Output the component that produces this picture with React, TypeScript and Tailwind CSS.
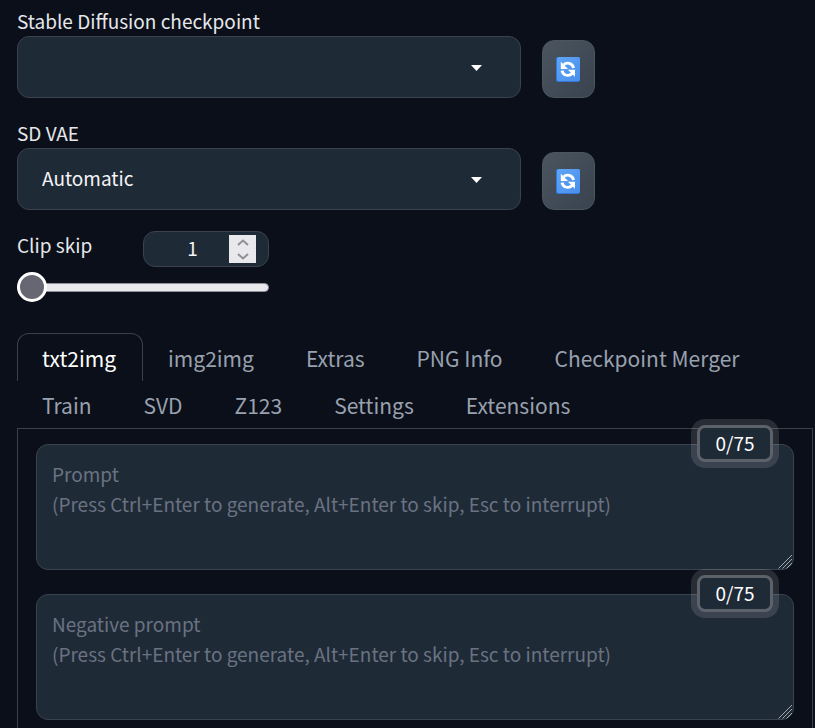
import { useState } from "react";
import { clsx } from "clsx";

const tabs = [
  "txt2img",
  "img2img",
  "Extras",
  "PNG Info",
  "Checkpoint Merger",
  "Train",
  "SVD",
  "Z123",
  "Settings",
  "Extensions",
];

const RefreshIcon = () => (
  <svg width="25" height="25" viewBox="0 0 25 25" aria-hidden="true">
    <defs>
      <linearGradient id="refresh-bg" x1="0" y1="0" x2="1" y2="1">
        <stop offset="0" stopColor="#5ea6f6" />
        <stop offset="1" stopColor="#4a8eee" />
      </linearGradient>
    </defs>
    <rect width="24" height="25" rx="2" fill="#3577d4" />
    <rect x="1" y="0" width="23" height="24" rx="2" fill="url(#refresh-bg)" />
    <path d="M4.8 4.8V12H12L9.2 9.2Z" fill="#fff" />
    <path d="M19 19.7V12.8H11.8L14.6 15.6Z" fill="#fff" />
    <path
      d="M7.5 8C10.5 5 16.5 5.6 17.6 11"
      fill="none"
      stroke="#fff"
      strokeWidth="2.8"
    />
    <path
      d="M16.2 16.6C13.2 19.6 7.2 19 6 13.6"
      fill="none"
      stroke="#fff"
      strokeWidth="2.8"
    />
  </svg>
);

type SelectRowProps = {
  id: string;
  label: string;
  options: string[];
};

const SelectRow = ({ id, label, options }: SelectRowProps) => (
  <div className="flex w-full max-w-[578px] items-end gap-[21px]">
    <div className="flex min-w-0 flex-1 flex-col">
      <label htmlFor={id} className="pb-0.5 text-[19px] leading-[26px]">
        {label}
      </label>
      <div className="relative">
        <select
          id={id}
          className="block h-[62px] w-full appearance-none rounded-xl border border-[#39424e] bg-[#1f2a37] px-6 pb-0.5 text-[19px] text-gray-100 outline-none"
        >
          {options.map((option) => (
            <option key={option}>{option}</option>
          ))}
        </select>
        <svg
          className="pointer-events-none absolute top-7 right-[38px]"
          width="13"
          height="8"
          viewBox="0 0 13 8"
          aria-hidden="true"
        >
          <path d="M1 1H12L6.5 7Z" fill="#fff" />
        </svg>
      </div>
    </div>
    <button
      type="button"
      aria-label={`Refresh ${label}`}
      className="flex h-[58px] w-[53px] shrink-0 items-center justify-center rounded-xl border border-[#4b5560] bg-linear-to-br from-[#4b5560] to-[#39434f]"
    >
      <RefreshIcon />
    </button>
  </div>
);

const PromptBox = ({ label }: { label: string }) => (
  <div className="relative">
    <textarea
      aria-label={label}
      placeholder={`${label}\n(Press Ctrl+Enter to generate, Alt+Enter to skip, Esc to interrupt)`}
      className="block h-[126px] w-full resize-none rounded-xl border border-[#39424e] bg-[#1f2a37] px-[15px] py-[14px] text-[19px] leading-[30px] text-gray-100 outline-none placeholder:text-gray-500"
    />
    {/* Resize grip */}
    <svg
      className="pointer-events-none absolute right-px bottom-px"
      width="15"
      height="15"
      viewBox="0 0 15 15"
      aria-hidden="true"
    >
      <path
        d="M0.5 14.5L14 1M4.5 14.5L14 5M8.5 14.5L14 9"
        stroke="#a3a8af"
        strokeWidth="1"
      />
    </svg>
    {/* Token counter */}
    <div className="absolute -top-[19px] right-[21px] flex h-[37px] w-[76px] items-center justify-center rounded-lg border-3 border-[#5d626a] bg-[#1f2a37] pb-0.5 text-[19px] leading-7 text-white ring-6 ring-white/12">
      0/75
    </div>
  </div>
);

const App = () => {
  const [clipSkip, setClipSkip] = useState(1);
  const [activeTab, setActiveTab] = useState("txt2img");

  const changeClipSkip = (value: number) =>
    setClipSkip(Math.min(12, Math.max(1, value)));

  return (
    <div className="flex min-h-screen flex-col bg-[#0b0f19] pt-2 pr-[2px] pl-[17px] font-['Noto_Sans_CJK_SC',sans-serif] text-gray-200">
      <div className="flex flex-col gap-[22px]">
        <SelectRow
          id="checkpoint"
          label="Stable Diffusion checkpoint"
          options={[""]}
        />
        <SelectRow id="vae" label="SD VAE" options={["Automatic", "None"]} />
      </div>

      {/* Clip skip */}
      <div className="mt-[21px] flex w-full max-w-[252px] flex-col gap-[5px]">
        <div className="flex justify-between">
          <label htmlFor="clip-skip" className="text-[19px] leading-7">
            Clip skip
          </label>
          <div className="flex h-9 w-[126px] items-center rounded-xl border border-[#39424e] bg-[#1f2a37] px-3">
            <input
              id="clip-skip"
              type="number"
              value={clipSkip}
              onChange={(e) => changeClipSkip(Number(e.target.value))}
              className="w-full min-w-0 flex-1 appearance-none bg-transparent pb-0.5 text-center text-[19px] leading-7 text-gray-100 outline-none [-moz-appearance:textfield] [&::-webkit-inner-spin-button]:appearance-none"
            />
            <div className="flex h-7 w-[27px] shrink-0 flex-col bg-[#e9e9ed]">
              <button
                type="button"
                aria-label="Increase"
                onClick={() => changeClipSkip(clipSkip + 1)}
                className="flex flex-1 items-center justify-center"
              >
                <svg width="12" height="7" viewBox="0 0 12 7">
                  <path
                    d="M1 6L6 1.5L11 6"
                    fill="none"
                    stroke="#8f8f94"
                    strokeWidth="2"
                  />
                </svg>
              </button>
              <button
                type="button"
                aria-label="Decrease"
                onClick={() => changeClipSkip(clipSkip - 1)}
                className="flex flex-1 items-center justify-center"
              >
                <svg width="12" height="7" viewBox="0 0 12 7">
                  <path
                    d="M1 1L6 5.5L11 1"
                    fill="none"
                    stroke="#8f8f94"
                    strokeWidth="2"
                  />
                </svg>
              </button>
            </div>
          </div>
        </div>
        <input
          type="range"
          aria-label="Clip skip slider"
          min={1}
          max={12}
          value={clipSkip}
          onChange={(e) => changeClipSkip(Number(e.target.value))}
          className="h-[30px] w-full appearance-none bg-transparent [&::-webkit-slider-runnable-track]:h-[9px] [&::-webkit-slider-runnable-track]:rounded-full [&::-webkit-slider-runnable-track]:border [&::-webkit-slider-runnable-track]:border-[#8f8f9d] [&::-webkit-slider-runnable-track]:bg-[#e9e9ed] [&::-webkit-slider-thumb]:-mt-3 [&::-webkit-slider-thumb]:-ml-px [&::-webkit-slider-thumb]:size-[30px] [&::-webkit-slider-thumb]:appearance-none [&::-webkit-slider-thumb]:rounded-full [&::-webkit-slider-thumb]:border-3 [&::-webkit-slider-thumb]:border-white [&::-webkit-slider-thumb]:bg-[#676774]"
        />
      </div>

      {/* Tabs */}
      <div role="tablist" className="mt-[31px] flex flex-wrap pb-px">
        {tabs.map((tab) => (
          <button
            key={tab}
            type="button"
            role="tab"
            aria-selected={tab === activeTab}
            onClick={() => setActiveTab(tab)}
            className={clsx(
              "-mb-px h-12 rounded-t-xl border border-b-0 pr-[26px] pl-6 text-[21px] leading-8",
              tab === activeTab
                ? "border-[#3b404b] text-white"
                : "border-transparent text-gray-400"
            )}
          >
            {tab}
          </button>
        ))}
      </div>

      <div className="flex flex-1 flex-col gap-6 border border-b-0 border-[#3b404b] px-[18px] pt-[15px] pb-2">
        <PromptBox label="Prompt" />
        <PromptBox label="Negative prompt" />
      </div>
    </div>
  );
};

export default App;
